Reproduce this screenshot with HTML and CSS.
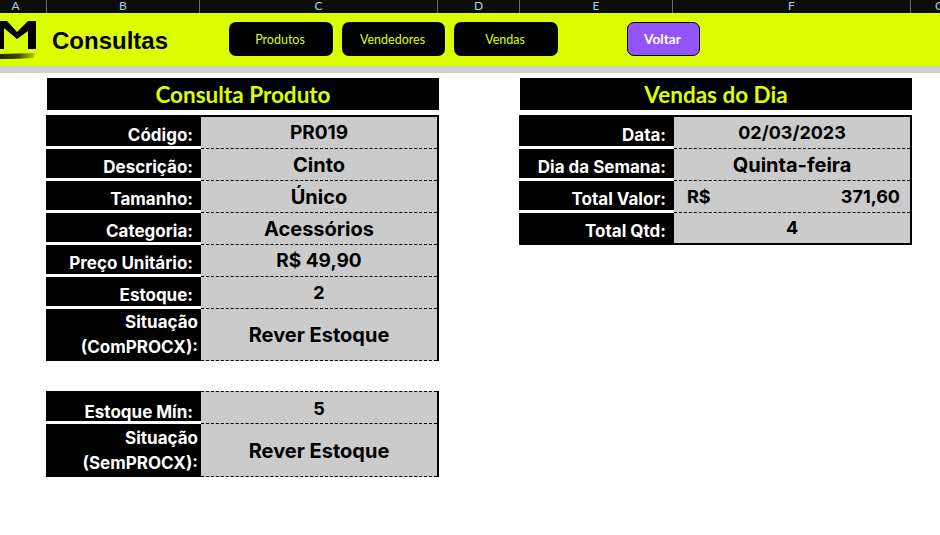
FILE: index.html
```html
<!DOCTYPE html>
<html lang="en">
	<head>
		<meta charset="UTF-8" />
		<title>Consultas</title>
		<link rel="stylesheet" href="styles.css">
	</head>
	<body>
		<div class="column-headers">
			<span class="col-a">A</span>
			<span>B</span>
			<span>C</span>
			<span>D</span>
			<span>E</span>
			<span>F</span>
			<span>G</span>
		</div>
		<header class="top-bar">
			<svg class="logo" width="36" height="53" viewBox="0 0 36 53">
				<defs>
					<linearGradient id="logo-fade" x1="0" x2="1" y1="0" y2="0">
						<stop offset="0" stop-color="#000" stop-opacity="0.85" />
						<stop offset="0.55" stop-color="#000" stop-opacity="0.7" />
						<stop offset="1" stop-color="#000" stop-opacity="0.15" />
					</linearGradient>
				</defs>
				<path d="M0 8 L7 8 L17 19 L28 8 L36 8 L36 36 L28 36 L28 18 L17 26 L4 15 L4 36 L0 36 Z" fill="#000" />
				<path d="M0 41 L35 40 L34 45 L12 46 L0 46 Z" fill="url(#logo-fade)" />
			</svg>
			<h1 class="page-title">Consultas</h1>
			<nav class="nav-buttons">
				<a class="nav-button produtos">Produtos</a>
				<a class="nav-button vendedores">Vendedores</a>
				<a class="nav-button vendas">Vendas</a>
			</nav>
			<a class="back-button">Voltar</a>
		</header>
		<div class="gray-strip"></div>
		<main class="sheet">
			<section class="panel">
				<h2 class="panel-title">Consulta Produto</h2>
				<div class="data-table">
					<div class="data-row"><div class="data-label">Código:</div><div class="data-value mixed">PR019</div></div>
					<div class="data-row"><div class="data-label">Descrição:</div><div class="data-value">Cinto</div></div>
					<div class="data-row"><div class="data-label">Tamanho:</div><div class="data-value">Único</div></div>
					<div class="data-row"><div class="data-label">Categoria:</div><div class="data-value">Acessórios</div></div>
					<div class="data-row"><div class="data-label">Preço Unitário:</div><div class="data-value mixed">R$ 49,90</div></div>
					<div class="data-row"><div class="data-label">Estoque:</div><div class="data-value numeric">2</div></div>
					<div class="data-row tall"><div class="data-label">Situação<br />(ComPROCX):</div><div class="data-value center">Rever Estoque</div></div>
				</div>
				<div class="data-table second">
					<div class="data-row"><div class="data-label">Estoque Mín:</div><div class="data-value numeric">5</div></div>
					<div class="data-row tall"><div class="data-label">Situação<br />(SemPROCX):</div><div class="data-value center">Rever Estoque</div></div>
				</div>
			</section>
			<section class="panel">
				<h2 class="panel-title">Vendas do Dia</h2>
				<div class="data-table solid-end">
					<div class="data-row"><div class="data-label">Data:</div><div class="data-value numeric">02/03/2023</div></div>
					<div class="data-row"><div class="data-label">Dia da Semana:</div><div class="data-value">Quinta-feira</div></div>
					<div class="data-row"><div class="data-label">Total Valor:</div><div class="data-value numeric money"><span>R$</span><span>371,60</span></div></div>
					<div class="data-row"><div class="data-label">Total Qtd:</div><div class="data-value numeric">4</div></div>
				</div>
			</section>
		</main>
	</body>
</html>
```

FILE: styles.css
```css
* {
	box-sizing: border-box;
}
body {
	margin: 0;
	height: 535px;
	overflow: hidden;
	background-color: white;
	font-family: "Inter", "Liberation Sans", sans-serif;
}

/* column letters */
.column-headers {
	display: grid;
	grid-template-columns: 47px 153px 238px 82px 153px 238px 58px;
	width: 969px;
	height: 13px;
	background-color: #0c0c0c;
	color: #a9cdf0;
	font-family: "Lato", sans-serif;
	font-size: 12px;
	line-height: 11px;
	text-align: center;
}
.column-headers span {
	height: 13px;
	border-right: 1px solid #6a6a6a;
}
.column-headers .col-a {
	padding-right: 15px;
}

/* lime bar */
.top-bar {
	display: flex;
	align-items: flex-start;
	height: 53px;
	background-color: #dcff00;
}
.logo {
	flex: none;
}
.page-title {
	margin: 14px 0 0 16px;
	width: 177px;
	font-family: "Liberation Sans", sans-serif;
	font-size: 24px;
	line-height: 27px;
	font-weight: bold;
	color: black;
}
.nav-buttons {
	display: flex;
	gap: 9px;
	margin-top: 9px;
}
.nav-button {
	display: flex;
	align-items: center;
	justify-content: center;
	height: 34px;
	padding-right: 2px;
	border-radius: 7px;
	background-color: black;
	color: #dcff00;
	font-family: "Lato", sans-serif;
	font-size: 12.5px;
}
.nav-button.produtos {
	width: 104px;
}
.nav-button.vendedores {
	width: 103px;
}
.nav-button.vendas {
	width: 104px;
}
.back-button {
	display: flex;
	align-items: center;
	justify-content: center;
	width: 73px;
	height: 34px;
	margin: 9px 0 0 69px;
	padding: 0 2px 2px 0;
	border: 1px solid black;
	border-radius: 7px;
	background-color: #9254fb;
	color: white;
	font-family: "Lato", sans-serif;
	font-size: 13.7px;
	font-weight: bold;
}
.gray-strip {
	height: 7px;
	background-color: #d0d0d0;
}

/* panels */
.sheet {
	display: flex;
	gap: 80px;
	padding: 5px 0 0 46px;
}
.panel {
	width: 393px;
}
.panel-title {
	margin: 0 0 5px 1px;
	height: 32px;
	background-color: black;
	color: #dcff00;
	font-family: "Lato", sans-serif;
	font-size: 22.5px;
	line-height: 33px;
	font-weight: bold;
	text-align: center;
}
.data-table {
	border-top: 2px solid black;
	border-right: 2px solid black;
}
.data-table.second {
	margin-top: 30px;
	border-top: 0;
}
.data-row {
	display: flex;
	height: 32px;
}
.data-row.tall {
	height: 52px;
}
.data-table.second .data-row {
	height: 33px;
}
.data-table.second .data-row.tall {
	height: 53px;
}
.data-label {
	width: 155px;
	margin-bottom: 3px;
	padding: 8px 8px 0 0;
	background-color: black;
	color: white;
	font-size: 17px;
	line-height: 20px;
	font-weight: 700;
	text-align: right;
}
.data-row:last-child .data-label {
	margin-bottom: 0;
}
.data-row.tall .data-label {
	padding: 1px 3px 0 0;
	line-height: 25px;
}
.data-table.second .data-label {
	padding-top: 11px;
}
.data-table.second .tall .data-label {
	padding-top: 2px;
}
.data-value {
	flex: 1;
	padding-top: 4px;
	border-bottom: 1px dashed black;
	background-color: #cbcbcb;
	color: black;
	font-size: 20px;
	line-height: 24px;
	font-weight: 700;
	text-align: center;
}
.data-value.numeric {
	font-size: 18px;
}
.data-value.mixed {
	font-size: 19px;
}
.data-table.second .data-value {
	padding-top: 5px;
}
.data-table.second .data-row:first-child .data-value {
	border-top: 1px dashed black;
}
.data-value.center {
	padding-top: 14px;
}
.data-table.second .data-value.center {
	padding-top: 15px;
}
.data-value.money {
	display: flex;
	justify-content: space-between;
	padding: 4px 10px 0 13px;
}
.solid-end .data-row:last-child .data-value {
	padding-top: 3px;
	border-bottom: 2px solid black;
}
```
